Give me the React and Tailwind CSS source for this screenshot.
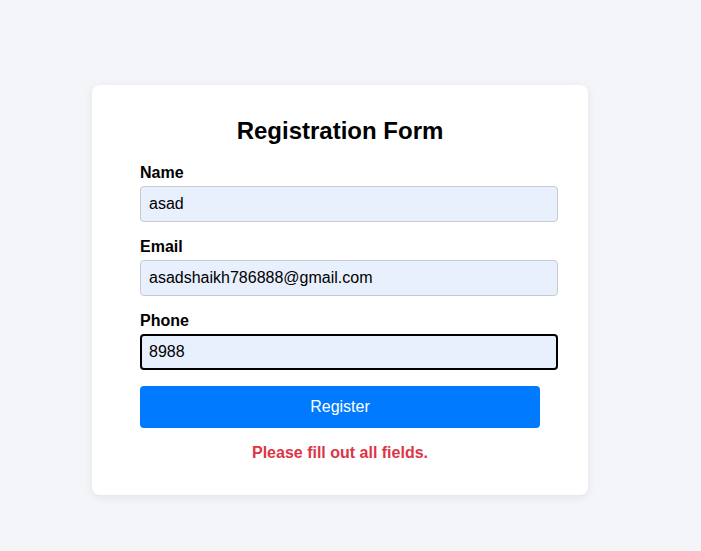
import React, { useState } from 'react';

const Field = ({ label, value, focused, className = '' }) => {
  return (
    <div className={className}>
      <label className="block font-bold text-[16px] leading-[18px] mb-[4px]">{label}</label>
      <input
        type="text"
        defaultValue={value}
        className={
          focused
            ? 'block w-[418px] h-[36px] px-[7px] rounded-[4px] border-2 border-black bg-[#e8f0fe] text-[16px] text-black outline-none'
            : 'block w-[418px] h-[36px] px-[8px] rounded-[4px] border border-[#c6c9cf] bg-[#e8f0fe] text-[16px] text-black outline-none'
        }
      />
    </div>
  );
};

const App = () => {
  const [error] = useState('Please fill out all fields.');

  return (
    <div
      className="min-h-screen bg-[#f4f5f9] pt-[85px] pl-[92px]"
      style={{ fontFamily: '"Liberation Sans", Arial, sans-serif' }}
    >
      <div className="w-[496px] bg-white rounded-lg shadow-[0_2px_10px_rgba(0,0,0,0.08)] px-12 pt-[32px] pb-[33px]">
        <h2 className="text-center font-bold text-[24px] leading-[28px] text-black">Registration Form</h2>
        <Field className="mt-[19px]" label="Name" value="asad" />
        <Field className="mt-[16px]" label="Email" value="asadshaikh786888@gmail.com" />
        <Field className="mt-[16px]" label="Phone" value="8988" focused />
        <button className="mt-4 block w-[400px] h-[42px] bg-[#007bff] text-white text-[16px] rounded-[4px]">
          Register
        </button>
        <p className="mt-[16px] text-center font-bold text-[16px] leading-[18px] text-[#dc3545]">{error}</p>
      </div>
    </div>
  );
};

export default App;
